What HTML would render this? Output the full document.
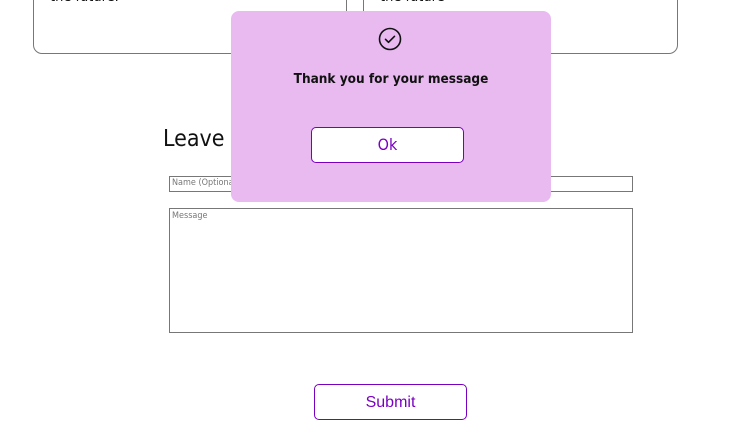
<!DOCTYPE html>
<html><head><style>
body{margin:0;width:737px;height:443px;position:relative;overflow:hidden;background:#fff;font-family:"DejaVu Sans","Liberation Sans",sans-serif;}
.card{position:absolute;top:-20px;height:72px;border:1px solid #777;border-radius:0 0 9px 9px;background:#fff;}
.card span{position:absolute;left:16px;top:9px;font-size:13px;color:#111;}
.abs{position:absolute;}
</style></head><body>
<div class="card" style="left:33px;width:312px;"><span>the future.</span></div>
<div class="card" style="left:363px;width:313px;"><span>the future</span></div>
<div class="abs" style="left:163px;top:126px;font-size:23px;color:#111;font-family:'DejaVu Sans Condensed','DejaVu Sans',sans-serif;">Leave a message</div>
<div class="abs" style="left:169px;top:176px;width:464px;height:16px;border:1px solid #777;box-sizing:border-box;font-size:9px;color:#777;padding:1px 2px;font-family:'DejaVu Sans Condensed',sans-serif;">Name (Optional)</div>
<div class="abs" style="left:169px;top:208px;width:464px;height:125px;border:1px solid #777;box-sizing:border-box;font-size:9px;color:#777;padding:2px 2px;font-family:'DejaVu Sans Condensed',sans-serif;">Message</div>
<div class="abs" style="left:314px;top:384px;width:153px;height:36px;box-sizing:border-box;border:1px solid #7a00c0;border-radius:5px;color:#7a00c0;font-family:'Liberation Sans',sans-serif;font-size:16px;text-align:center;line-height:35px;">Submit</div>
<div class="abs" style="left:231px;top:11px;width:320px;height:191px;background:#e8baf0;border-radius:8px;">
<svg class="abs" style="left:147px;top:16px" width="24" height="24" viewBox="0 0 24 24"><circle cx="12" cy="12" r="10.5" fill="none" stroke="#111" stroke-width="1.6"/><path d="M7.5 12.3l3 3 6-6" fill="none" stroke="#111" stroke-width="1.6" stroke-linecap="round" stroke-linejoin="round"/></svg>
<div class="abs" style="left:0;top:60px;width:320px;text-align:center;font-weight:bold;font-size:13.5px;color:#111;font-family:'DejaVu Sans Condensed','DejaVu Sans',sans-serif;">Thank you for your message</div>
<div class="abs" style="left:80px;top:116px;width:153px;height:36px;box-sizing:border-box;background:#fff;border:1px solid #7a00c0;border-radius:5px;color:#7a00c0;font-size:16px;text-align:center;line-height:34px;font-family:'DejaVu Sans Condensed','DejaVu Sans',sans-serif;">Ok</div>
</div>
</body></html>
